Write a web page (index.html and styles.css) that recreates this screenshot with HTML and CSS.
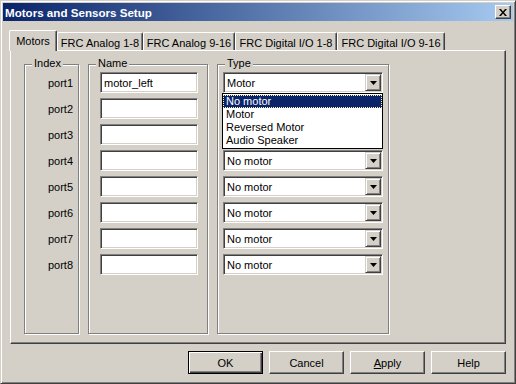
FILE: index.html
```html
<!DOCTYPE html>
<html lang="en">
<head>
    <meta charset="UTF-8">
    <title>Motors and Sensors Setup</title>
    <link rel="stylesheet" href="styles.css">
</head>
<body>
<div class="window">
    <div class="titlebar">
        <span class="title">Motors and Sensors Setup</span>
        <button class="close-btn">
            <svg width="8" height="7" viewBox="0 0 8 7">
                <path d="M0 0 L2 0 L4 2.5 L6 0 L8 0 L5 3.5 L8 7 L6 7 L4 4.5 L2 7 L0 7 L3 3.5 Z" fill="#000"/>
            </svg>
        </button>
    </div>

    <div class="tabs">
        <div class="tab tab-motors selected">Motors</div>
        <div class="tab tab-an1">FRC Analog 1-8</div>
        <div class="tab tab-an2">FRC Analog 9-16</div>
        <div class="tab tab-dg1">FRC Digital I/O 1-8</div>
        <div class="tab tab-dg2">FRC Digital I/O 9-16</div>
    </div>

    <div class="panel">
        <div class="group group-index">
            <span class="legend">Index</span>
            <div class="port">port1</div>
            <div class="port">port2</div>
            <div class="port">port3</div>
            <div class="port">port4</div>
            <div class="port">port5</div>
            <div class="port">port6</div>
            <div class="port">port7</div>
            <div class="port">port8</div>
        </div>

        <div class="group group-name">
            <span class="legend">Name</span>
            <input class="edit" type="text" value="motor_left">
            <input class="edit" type="text">
            <input class="edit" type="text">
            <input class="edit" type="text">
            <input class="edit" type="text">
            <input class="edit" type="text">
            <input class="edit" type="text">
            <input class="edit" type="text">
        </div>

        <div class="group group-type">
            <span class="legend">Type</span>
            <div class="combo"><span class="combo-text">Motor</span><span class="combo-btn"><svg width="7" height="4" viewBox="0 0 7 4"><path d="M0 0 H7 L3.5 4 Z" fill="#000"/></svg></span></div>
            <!-- these two sit under the open list -->
            <div class="combo"><span class="combo-text"></span><span class="combo-btn"></span></div>
            <div class="combo"><span class="combo-text"></span><span class="combo-btn"></span></div>
            <div class="combo"><span class="combo-text">No motor</span><span class="combo-btn"><svg width="7" height="4" viewBox="0 0 7 4"><path d="M0 0 H7 L3.5 4 Z" fill="#000"/></svg></span></div>
            <div class="combo"><span class="combo-text">No motor</span><span class="combo-btn"><svg width="7" height="4" viewBox="0 0 7 4"><path d="M0 0 H7 L3.5 4 Z" fill="#000"/></svg></span></div>
            <div class="combo"><span class="combo-text">No motor</span><span class="combo-btn"><svg width="7" height="4" viewBox="0 0 7 4"><path d="M0 0 H7 L3.5 4 Z" fill="#000"/></svg></span></div>
            <div class="combo"><span class="combo-text">No motor</span><span class="combo-btn"><svg width="7" height="4" viewBox="0 0 7 4"><path d="M0 0 H7 L3.5 4 Z" fill="#000"/></svg></span></div>
            <div class="combo"><span class="combo-text">No motor</span><span class="combo-btn"><svg width="7" height="4" viewBox="0 0 7 4"><path d="M0 0 H7 L3.5 4 Z" fill="#000"/></svg></span></div>

            <div class="droplist">
                <div class="item current">No motor</div>
                <div class="item">Motor</div>
                <div class="item">Reversed Motor</div>
                <div class="item">Audio Speaker</div>
            </div>
        </div>
    </div>

    <div class="buttons">
        <button class="btn default">OK</button>
        <button class="btn">Cancel</button>
        <button class="btn"><u>A</u>pply</button>
        <button class="btn">Help</button>
    </div>
</div>
</body>
</html>
```

FILE: styles.css
```css
body {
    margin: 0;
    font-family: "Liberation Sans", Arial, sans-serif;
    font-size: 11px;
    color: #000;
}
.window {
    width: 516px;
    height: 384px;
    box-sizing: border-box;
    background: #d4d0c8;
    border: 1px solid;
    border-color: #d4d0c8 #404040 #404040 #d4d0c8;
    box-shadow: inset 1px 1px 0 #fff, inset -1px -1px 0 #808080;
    padding: 2px;
}
.titlebar {
    height: 18px;
    display: flex;
    align-items: center;
    justify-content: space-between;
    padding: 0 2px 0 2px;
    background: linear-gradient(to right, #0a246a, #a6caf0);
}
.title {
    color: #fff;
    font-weight: bold;
    font-size: 11.6px;
}
.close-btn {
    width: 16px;
    height: 14px;
    padding: 0;
    display: flex;
    align-items: center;
    justify-content: center;
    background: #d4d0c8;
    border: 1px solid;
    border-color: #fff #404040 #404040 #fff;
    box-shadow: inset -1px -1px 0 #808080;
}

/* tabs */
.tabs {
    display: flex;
    align-items: flex-end;
    margin-top: 9px;
    padding-left: 6px;
    height: 20px;
}
.tab {
    box-sizing: border-box;
    height: 18px;
    padding-top: 4px;
    line-height: 13px;
    text-align: center;
    white-space: nowrap;
    border: 1px solid;
    border-bottom: none;
    border-color: #fff #404040 #fff #fff;
    border-radius: 2px 2px 0 0;
    box-shadow: inset -1px 0 0 #808080;
}
.tab.selected {
    height: 21px;
    margin-bottom: -1px;
    position: relative;
    z-index: 1;
    background: #d4d0c8;
}
.tab-motors { width: 48px; }
.tab-an1 { width: 86px; }
.tab-an2 { width: 92px; }
.tab-dg1 { width: 102px; }
.tab-dg2 { width: 108px; }

/* page */
.panel {
    box-sizing: border-box;
    width: 496px;
    height: 294px;
    margin-left: 7px;
    border: 1px solid;
    border-color: #fff #404040 #404040 #fff;
    box-shadow: inset -1px -1px 0 #808080;
    display: flex;
    gap: 9px;
    padding: 13px 0 0 13px;
}
.group {
    position: relative;
    box-sizing: border-box;
    height: 270px;
    border: 1px solid #808080;
    box-shadow: 1px 1px 0 #fff, inset 1px 1px 0 #fff;
    padding-top: 7px;
    display: flex;
    flex-direction: column;
    gap: 5px;
}
.legend {
    position: absolute;
    top: -8px;
    left: 7px;
    padding: 0 2px;
    line-height: 13px;
    background: #d4d0c8;
}
.group-index {
    width: 55px;
    padding-right: 5px;
}
.group-name {
    width: 120px;
    padding-left: 11px;
}
.group-type {
    width: 172px;
    padding-left: 5px;
}
.port {
    height: 21px;
    display: flex;
    align-items: center;
    justify-content: flex-end;
}
.edit,
.combo {
    box-sizing: border-box;
    height: 21px;
    background: #fff;
    border: 1px solid;
    border-color: #808080 #fff #fff #808080;
    box-shadow: inset 1px 1px 0 #404040, inset -1px -1px 0 #d4d0c8;
}
.edit {
    width: 98px;
    margin: 0;
    padding: 0 0 0 3px;
    font: inherit;
    outline: none;
}
.combo {
    width: 160px;
    display: flex;
    align-items: center;
    padding: 1px;
}
.combo-text {
    flex: 1;
    padding-left: 2px;
}
.combo-btn {
    box-sizing: border-box;
    width: 16px;
    height: 17px;
    display: flex;
    align-items: center;
    justify-content: center;
    background: #d4d0c8;
    border: 1px solid;
    border-color: #d4d0c8 #404040 #404040 #d4d0c8;
    box-shadow: inset 1px 1px 0 #fff, inset -1px -1px 0 #808080;
}
.droplist {
    position: absolute;
    top: 28px;
    left: 4px;
    width: 161px;
    box-sizing: border-box;
    background: #fff;
    border: 1px solid #000;
    padding: 1px 0;
    z-index: 2;
}
.item {
    height: 13px;
    line-height: 13px;
    padding-left: 3px;
}
.item.current {
    background: #0a246a;
    color: #fff;
    outline: 1px dotted #fff8b0;
    outline-offset: -1px;
}

/* dialog buttons */
.buttons {
    display: flex;
    justify-content: flex-end;
    gap: 6px;
    margin-top: 7px;
    padding-right: 7px;
}
.btn {
    box-sizing: border-box;
    width: 75px;
    height: 23px;
    padding: 0;
    font: inherit;
    color: #000;
    background: #d4d0c8;
    border: 1px solid;
    border-color: #fff #404040 #404040 #fff;
    box-shadow: inset -1px -1px 0 #808080;
}
.btn.default {
    border-color: #000;
    box-shadow: inset 1px 1px 0 #fff, inset -1px -1px 0 #404040, inset -2px -2px 0 #808080;
}
```
